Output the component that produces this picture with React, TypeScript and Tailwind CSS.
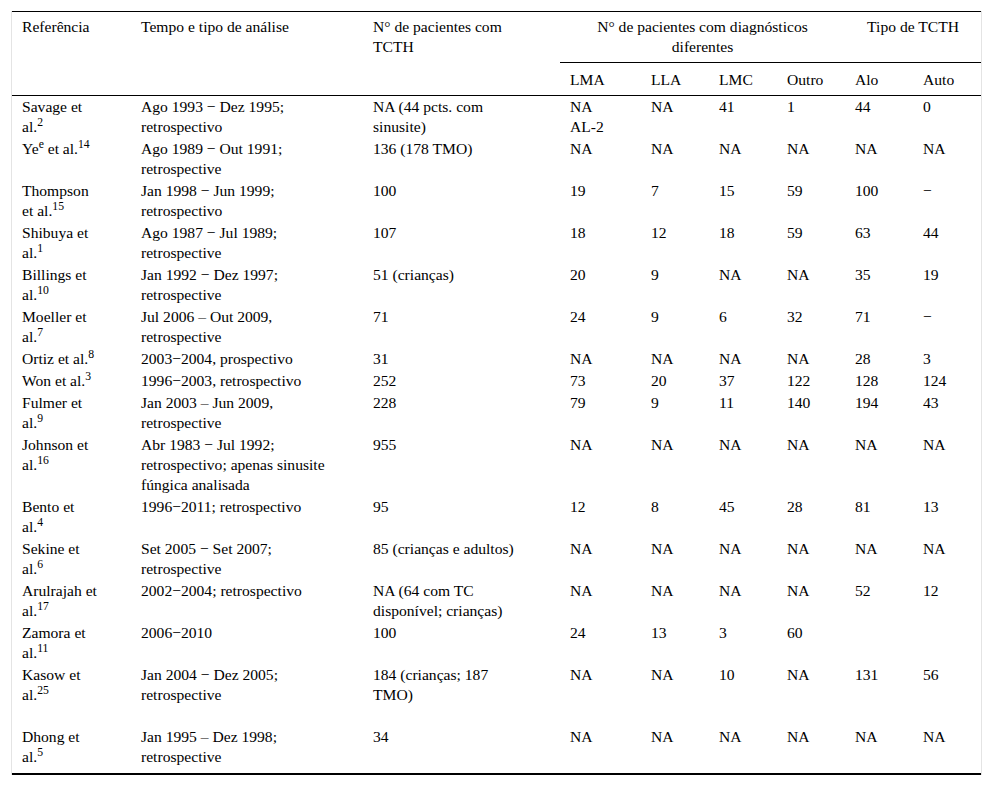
import React from "react";

type Row = {
  ref: React.ReactNode;
  tempo: React.ReactNode;
  n: React.ReactNode;
  v: React.ReactNode[];
  extra?: boolean;
  last?: boolean;
};

const NA6 = ["NA", "NA", "NA", "NA", "NA", "NA"];

const rows: Row[] = [
  {
    ref: (<>Savage et<br />al.<sup>2</sup></>),
    tempo: (<>Ago 1993 − Dez 1995;<br />retrospectivo</>),
    n: (<>NA (44 pcts. com<br />sinusite)</>),
    v: [(<>NA<br />AL-2</>), "NA", "41", "1", "44", "0"],
  },
  {
    ref: (<>Ye<sup>e</sup> et al.<sup>14</sup></>),
    tempo: (<>Ago 1989 − Out 1991;<br />retrospective</>),
    n: "136 (178 TMO)",
    v: NA6,
  },
  {
    ref: (<>Thompson<br />et al.<sup>15</sup></>),
    tempo: (<>Jan 1998 − Jun 1999;<br />retrospectivo</>),
    n: "100",
    v: ["19", "7", "15", "59", "100", "−"],
  },
  {
    ref: (<>Shibuya et<br />al.<sup>1</sup></>),
    tempo: (<>Ago 1987 − Jul 1989;<br />retrospective</>),
    n: "107",
    v: ["18", "12", "18", "59", "63", "44"],
  },
  {
    ref: (<>Billings et<br />al.<sup>10</sup></>),
    tempo: (<>Jan 1992 − Dez 1997;<br />retrospective</>),
    n: "51 (crianças)",
    v: ["20", "9", "NA", "NA", "35", "19"],
  },
  {
    ref: (<>Moeller et<br />al.<sup>7</sup></>),
    tempo: (<>Jul 2006 – Out 2009,<br />retrospective</>),
    n: "71",
    v: ["24", "9", "6", "32", "71", "−"],
  },
  {
    ref: (<>Ortiz et al.<sup>8</sup></>),
    tempo: "2003−2004, prospectivo",
    n: "31",
    v: ["NA", "NA", "NA", "NA", "28", "3"],
  },
  {
    ref: (<>Won et al.<sup>3</sup></>),
    tempo: "1996−2003, retrospectivo",
    n: "252",
    v: ["73", "20", "37", "122", "128", "124"],
  },
  {
    ref: (<>Fulmer et<br />al.<sup>9</sup></>),
    tempo: (<>Jan 2003 – Jun 2009,<br />retrospective</>),
    n: "228",
    v: ["79", "9", "11", "140", "194", "43"],
  },
  {
    ref: (<>Johnson et<br />al.<sup>16</sup></>),
    tempo: (<>Abr 1983 − Jul 1992;<br />retrospectivo; apenas sinusite<br />fúngica analisada</>),
    n: "955",
    v: NA6,
  },
  {
    ref: (<>Bento et<br />al.<sup>4</sup></>),
    tempo: "1996−2011; retrospectivo",
    n: "95",
    v: ["12", "8", "45", "28", "81", "13"],
  },
  {
    ref: (<>Sekine et<br />al.<sup>6</sup></>),
    tempo: (<>Set 2005 − Set 2007;<br />retrospective</>),
    n: "85 (crianças e adultos)",
    v: NA6,
  },
  {
    ref: (<>Arulrajah et<br />al.<sup>17</sup></>),
    tempo: "2002−2004; retrospectivo",
    n: (<>NA (64 com TC<br />disponível; crianças)</>),
    v: ["NA", "NA", "NA", "NA", "52", "12"],
  },
  {
    ref: (<>Zamora et<br />al.<sup>11</sup></>),
    tempo: "2006−2010",
    n: "100",
    v: ["24", "13", "3", "60", "", ""],
  },
  {
    ref: (<>Kasow et<br />al.<sup>25</sup></>),
    tempo: (<>Jan 2004 − Dez 2005;<br />retrospective</>),
    n: (<>184 (crianças; 187<br />TMO)</>),
    v: ["NA", "NA", "10", "NA", "131", "56"],
    extra: true,
  },
  {
    ref: (<>Dhong et<br />al.<sup>5</sup></>),
    tempo: (<>Jan 1995 – Dez 1998;<br />retrospective</>),
    n: "34",
    v: NA6,
    last: true,
  },
];

export default function App() {
  return (
    <div className="min-h-[785px] bg-white pt-[11px] pl-[11px] font-['Liberation_Serif',serif] text-[15.6px] text-black">
      <div className="w-[971px] border-x border-[#e4e4e4]">
        <table className="w-[969px] table-fixed border-separate border-spacing-0 border-t border-b-2 border-black">
          <colgroup>
            <col className="w-[119px]" />
            <col className="w-[232px]" />
            <col className="w-[197px]" />
            <col className="w-[81px]" />
            <col className="w-[68px]" />
            <col className="w-[68px]" />
            <col className="w-[68px]" />
            <col className="w-[68px]" />
            <col className="w-[68px]" />
          </colgroup>
          <thead>
            <tr>
              <th rowSpan={2} className="border-b border-black pl-[10px] pr-[4px] pt-[5px] text-left align-top font-normal leading-[20px]">
                Referência
              </th>
              <th rowSpan={2} className="border-b border-black pl-[10px] pr-[4px] pt-[5px] text-left align-top font-normal leading-[20px]">
                Tempo e tipo de análise
              </th>
              <th rowSpan={2} className="border-b border-black pl-[10px] pr-[4px] pt-[5px] text-left align-top font-normal leading-[20px]">
                N° de pacientes com
                <br />
                TCTH
              </th>
              <th colSpan={4} className="border-b border-black px-[6px] pt-[5px] pb-[5px] text-center align-top font-normal leading-[20px]">
                N° de pacientes com diagnósticos
                <br />
                diferentes
              </th>
              <th colSpan={2} className="border-b border-black px-[6px] pt-[5px] pb-[5px] text-center align-top font-normal leading-[20px]">
                Tipo de TCTH
              </th>
            </tr>
            <tr>
              {["LMA", "LLA", "LMC", "Outro", "Alo", "Auto"].map((h) => (
                <th key={h} className="border-b border-black pl-[10px] pr-[4px] pt-[7px] pb-[5px] text-left align-top font-normal leading-[20px]">
                  {h}
                </th>
              ))}
            </tr>
          </thead>
          <tbody>
            {rows.map((r, i) => {
              const pb = r.extra ? "pb-[21px]" : r.last ? "pb-[6px]" : "pb-[1px]";
              const cls = `pl-[10px] pr-[4px] pt-[1px] ${pb} text-left align-top leading-[20px] whitespace-nowrap`;
              return (
                <tr key={i}>
                  <td className={cls}>{r.ref}</td>
                  <td className={cls}>{r.tempo}</td>
                  <td className={cls}>{r.n}</td>
                  {r.v.map((x, j) => (
                    <td key={j} className={cls}>
                      {x}
                    </td>
                  ))}
                </tr>
              );
            })}
          </tbody>
        </table>
      </div>
    </div>
  );
}
